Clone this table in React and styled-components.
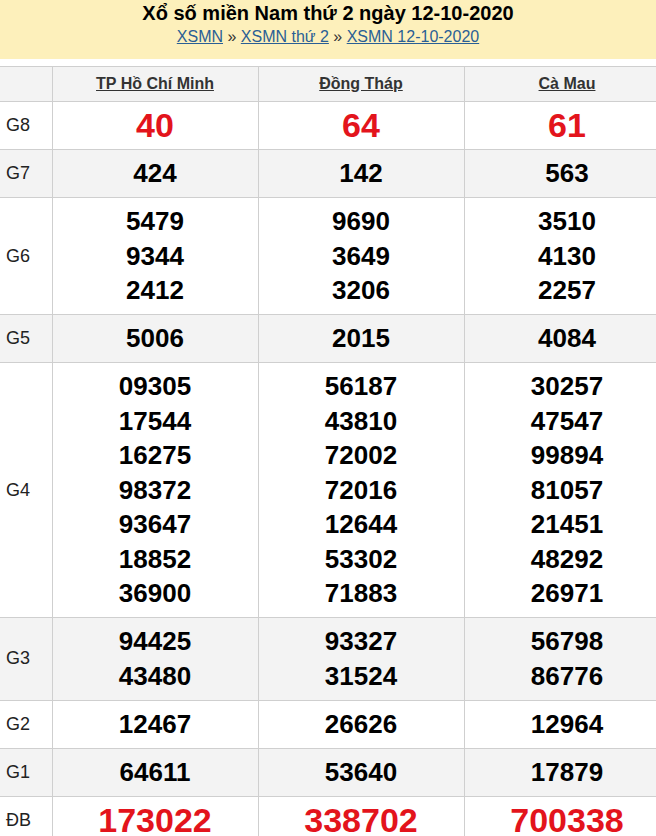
import React from "react";
import styled, { createGlobalStyle } from "styled-components";

const GlobalStyle = createGlobalStyle`
  html, body {
    margin: 0;
    padding: 0;
    background: #fff;
    overflow-x: hidden;
  }
  body {
    font-family: "Liberation Sans", Arial, sans-serif;
  }
`;

const Page = styled.div`
  width: 656px;
  overflow: hidden;
`;

const Banner = styled.div`
  background: #fdf0bb;
  height: 59px;
  padding-top: 1px;
  box-sizing: border-box;
  text-align: center;
  margin-bottom: 7px;
`;

const Title = styled.h1`
  margin: 0;
  font-size: 20px;
  line-height: 24px;
  font-weight: bold;
  color: #000;
`;

const Crumbs = styled.div`
  margin-top: 1px;
  font-size: 16px;
  line-height: 22px;
  color: #333;

  a {
    color: #2a5f95;
    text-decoration: underline;
  }
`;

const Table = styled.table`
  border-collapse: collapse;
  table-layout: fixed;
  width: 670px;
`;

const HeadCell = styled.th`
  background: #f3f3f3;
  height: 34px;
  padding: 0;
  border: 1px solid #cfcfcf;
  font-size: 16px;
  font-weight: bold;
  color: #333;

  a {
    color: #333;
    text-decoration: underline;
  }
`;

const Row = styled.tr`
  background: ${({ $alt }) => ($alt ? "#f3f3f3" : "#fff")};
`;

const Label = styled.td`
  border: 1px solid #cfcfcf;
  border-left: none;
  padding: 0 0 0 6px;
  font-size: 18px;
  color: #222;
  vertical-align: middle;
`;

const Cell = styled.td`
  border: 1px solid #cfcfcf;
  padding: 6px 0 6.5px;
  text-align: center;
  vertical-align: middle;
`;

const Num = styled.div`
  font-weight: bold;
  font-size: ${({ $big }) => ($big ? "34px" : "26px")};
  line-height: 34.5px;
  height: 34.5px;
  color: ${({ $big }) => ($big ? "#e3141c" : "#000")};
`;

const provinces = ["TP Hồ Chí Minh", "Đồng Tháp", "Cà Mau"];

const prizes = [
  { name: "G8", big: true, data: [["40"], ["64"], ["61"]] },
  { name: "G7", data: [["424"], ["142"], ["563"]] },
  {
    name: "G6",
    data: [
      ["5479", "9344", "2412"],
      ["9690", "3649", "3206"],
      ["3510", "4130", "2257"],
    ],
  },
  { name: "G5", data: [["5006"], ["2015"], ["4084"]] },
  {
    name: "G4",
    data: [
      ["09305", "17544", "16275", "98372", "93647", "18852", "36900"],
      ["56187", "43810", "72002", "72016", "12644", "53302", "71883"],
      ["30257", "47547", "99894", "81057", "21451", "48292", "26971"],
    ],
  },
  {
    name: "G3",
    data: [
      ["94425", "43480"],
      ["93327", "31524"],
      ["56798", "86776"],
    ],
  },
  { name: "G2", data: [["12467"], ["26626"], ["12964"]] },
  { name: "G1", data: [["64611"], ["53640"], ["17879"]] },
  { name: "ĐB", big: true, data: [["173022"], ["338702"], ["700338"]] },
];

export default function App() {
  return (
    <Page>
      <GlobalStyle />
      <Banner>
        <Title>Xổ số miền Nam thứ 2 ngày 12-10-2020</Title>
        <Crumbs>
          <a href="#">XSMN</a> » <a href="#">XSMN thứ 2</a> »{" "}
          <a href="#">XSMN 12-10-2020</a>
        </Crumbs>
      </Banner>
      <Table>
        <colgroup>
          <col style={{ width: 52 }} />
          <col style={{ width: 206 }} />
          <col style={{ width: 206 }} />
          <col style={{ width: 206 }} />
        </colgroup>
        <thead>
          <tr>
            <HeadCell style={{ borderLeft: "none" }} />
            {provinces.map((p) => (
              <HeadCell key={p}>
                <a href="#">{p}</a>
              </HeadCell>
            ))}
          </tr>
        </thead>
        <tbody>
          {prizes.map((prize, i) => (
            <Row key={prize.name} $alt={i % 2 === 1}>
              <Label>{prize.name}</Label>
              {prize.data.map((nums, j) => (
                <Cell key={j}>
                  {nums.map((n, k) => (
                    <Num key={k} $big={prize.big}>
                      {n}
                    </Num>
                  ))}
                </Cell>
              ))}
            </Row>
          ))}
        </tbody>
      </Table>
    </Page>
  );
}
